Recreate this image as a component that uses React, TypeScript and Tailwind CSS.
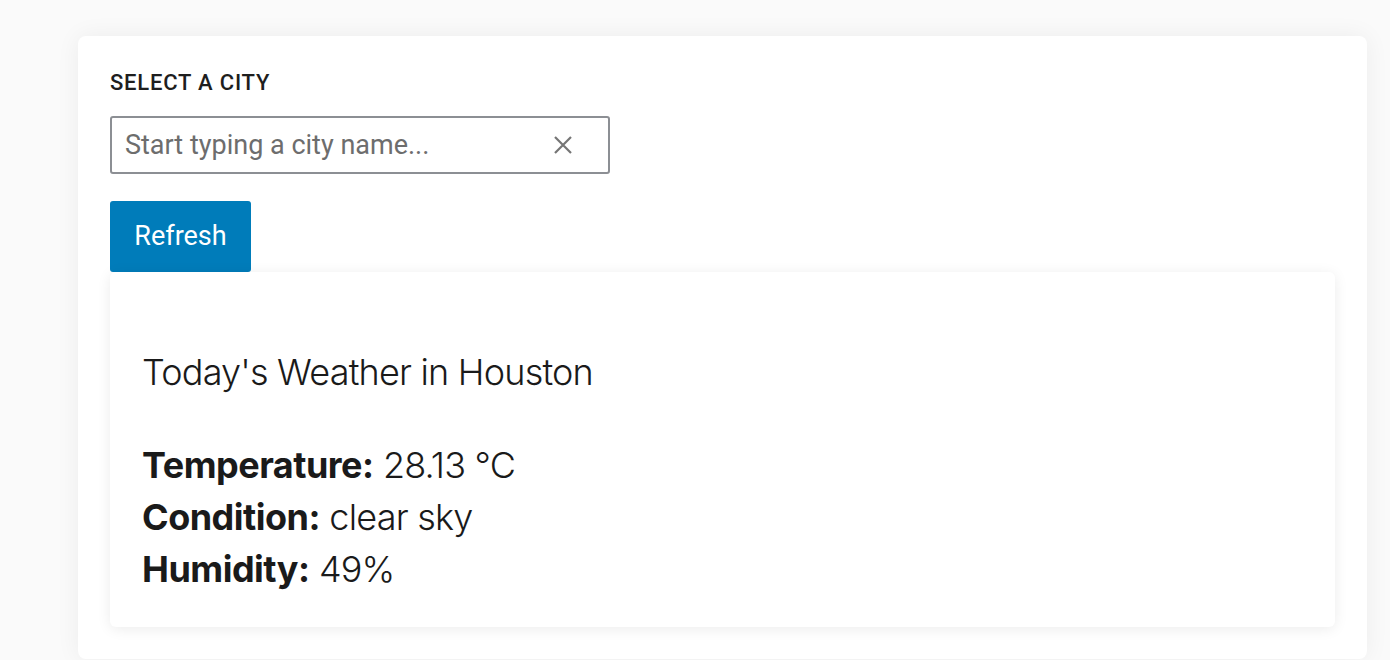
import React from "react";

const weather = {
  city: "Houston",
  temperature: "28.13 °C",
  condition: "clear sky",
  humidity: "49%",
};

export default function App() {
  return (
    <div className="min-h-[660px] bg-[#fafafa] pl-[78px] pr-[23px] pt-[36px] font-['Roboto',sans-serif]">
      <div className="rounded-lg bg-white px-[32px] pt-[32px] pb-[32px] shadow-[0_0_24px_rgba(0,0,0,0.06)]">
        {/* City picker */}
        <label className="block text-[22px] font-medium uppercase leading-[30px] tracking-[0.8px] text-[#1e1e1e]">
          Select a city
        </label>
        <div className="mt-[18px] flex h-[58px] w-[500px] items-center rounded-[3px] border-2 border-[#8c8f94] pl-[13px] pr-[34px]">
          <input
            className="min-w-0 flex-1 bg-transparent text-[27px] text-[#1e1e1e] outline-none placeholder:text-[#6d6d6d]"
            placeholder="Start typing a city name..."
          />
          <svg width="22" height="22" viewBox="0 0 22 22" className="shrink-0">
            <path d="M3 3L19 19M19 3L3 19" stroke="#757575" strokeWidth="2.2" />
          </svg>
        </div>
        <button className="mt-[27px] block h-[71px] w-[141px] rounded-[3px] bg-[#007cba] text-[27px] text-white">
          Refresh
        </button>

        {/* Weather card */}
        <div className="rounded-md bg-white px-[32px] pt-[74px] pb-[32px] shadow-[0_2px_14px_rgba(0,0,0,0.08)] font-['Inter',sans-serif] text-[36px] leading-[52px] text-[#1a1a1a]">
          <h2 className="font-light tracking-[-0.8px]">Today's Weather in {weather.city}</h2>
          <div className="mt-[41px] font-light tracking-[-0.8px]">
            <p>
              <span className="font-bold tracking-[-0.5px]">Temperature:</span> {weather.temperature}
            </p>
            <p>
              <span className="font-bold tracking-[-0.5px]">Condition:</span> {weather.condition}
            </p>
            <p>
              <span className="font-bold tracking-[-0.5px]">Humidity:</span> {weather.humidity}
            </p>
          </div>
        </div>
      </div>
    </div>
  );
}
